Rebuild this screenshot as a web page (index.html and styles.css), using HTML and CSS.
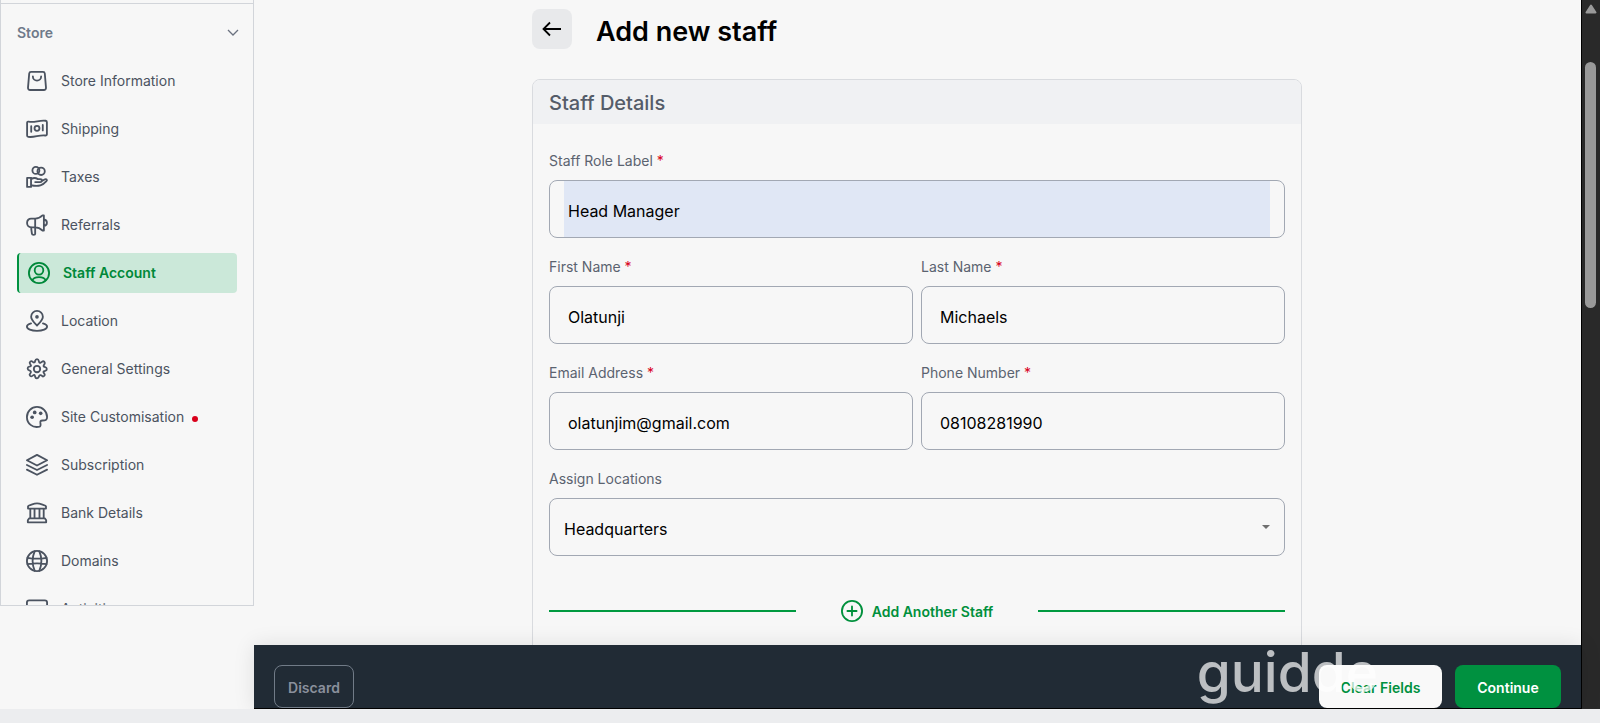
FILE: index.html
```html
<!DOCTYPE html>
<html lang="en">
<head>
<meta charset="utf-8">
<title>Add new staff</title>
<link rel="stylesheet" href="styles.css">
</head>
<body>
<div class="app">
  <div class="workspace">
    <nav class="sidebar" aria-label="Store">
      <button class="group" type="button">Store
        <svg class="chevron" viewBox="0 0 12 12"><path d="M1 3l5 5 5-5"/></svg>
      </button>
      <ul class="menu">
        <li><a class="item" href="#"><svg class="icon" viewBox="0 0 24 24"><path d="M5.500 2h13a2 2 0 0 1 2 1.800l1.300 15.400a2.300 2.300 0 0 1-2.300 2.600h-15a2.300 2.300 0 0 1-2.300-2.600L3.500 3.800a2 2 0 0 1 2-1.800zM7.500 7a4.500 4.500 0 0 0 9 0"/></svg>Store Information</a></li>
        <li><a class="item" href="#"><svg class="icon" viewBox="0 0 24 24"><path d="M1.200 5.300c0-1 .8-1.500 1.700-1.300 6.300 1.500 11.600-2 18.600-1 .8.100 1.300.7 1.300 1.500v13.200c0 1-.8 1.500-1.700 1.400-6.600-1-11.900 2.500-18.600 1.500-.8-.1-1.300-.7-1.300-1.500zM5.700 9v6M18.300 7.500v6"/><circle cx="12" cy="11.300" r="2.700"/></svg>Shipping</a></li>
        <li><a class="item" href="#"><svg class="icon" viewBox="0 0 24 24"><circle cx="10.800" cy="4.800" r="3.800"/><circle cx="16.500" cy="5.800" r="4"/><path d="M1.200 13h4.300v9.800H1.200zM5.500 14.300c3-1.800 5.500-1.300 7.500 0h2.500c2.500 0 2.500 3.200 0 3.200H10M17 16.500l3.800-2c1.500-.7 2.700.9 1.500 2-4 4.500-8 6.300-16.800 4.500"/></svg>Taxes</a></li>
        <li><a class="item" href="#"><svg class="icon" viewBox="0 0 24 24"><path d="M5.500 5H10v9.500H5.500a4.300 4.300 0 0 1-4.300-4.300v-.9A4.300 4.300 0 0 1 5.500 5zM10 5c3.500 0 6-1.500 8-3.500h1.500v16.500H18c-2-2-4.500-3.500-8-3.500M19.500 6c4.400.5 4.400 6.500 0 7M5.500 14.500l1 7.300c.2 1.300 3.500 1.300 3.500 0v-7.300"/></svg>Referrals</a></li>
        <li><a class="item active" href="#" aria-current="page"><svg class="icon" viewBox="0 0 24 24"><circle cx="12" cy="12" r="11"/><circle cx="12" cy="9" r="4.700"/><path d="M4.800 20c1.500-4.600 12.900-4.600 14.400 0"/></svg>Staff Account</a></li>
        <li><a class="item" href="#"><svg class="icon" viewBox="0 0 24 24"><path d="M12 17c-3.700-4-6.400-6.300-6.400-9.700a6.400 6.400 0 0 1 12.800 0c0 3.400-2.700 5.700-6.400 9.700z"/><circle class="dot" cx="12" cy="7.500" r="2"/><path d="M5.500 14.700c-2.900.8-4.500 1.800-4.500 3.300 0 2.800 4.800 4.700 11 4.700s11-1.900 11-4.700c0-1.500-1.600-2.500-4.500-3.300"/></svg>Location</a></li>
        <li><a class="item" href="#"><svg class="icon" viewBox="0 0 24 24"><circle cx="12" cy="12" r="3.500"/><path d="M10 3.500c.5-3 3.500-3 4 0s1.500 1.700 3.500.5 4 1 2.500 3-1 2.500 1 3 2.500 3.500 0 4-2.500 1-1 3-1 4-2.500 2.500-3-1-3.500 1-3.500 2.500-4 0-1-2.500-3-1-4-1-2.500-2.500 1-3-1-3.500-2.500-3.500 0-4 2.500-1 1-3 1-4 2.500-2.500 3 1 3-1z"/></svg>General Settings</a></li>
        <li><a class="item" href="#"><svg class="icon" viewBox="0 0 24 24"><path d="M15 22.500c-8 2-14-3.500-14-10.500a11 11 0 0 1 22 0c.2 3.500-2 3.800-5 3.800-2.200 0-2.500 1-2.300 2.700.3 1.500.5 3.500-.7 4z"/><circle class="dot" cx="6.700" cy="12.300" r="2"/><circle class="dot" cx="9.500" cy="7" r="2"/><circle class="dot" cx="16" cy="8" r="2"/></svg>Site Customisation<span class="notice"></span></a></li>
        <li><a class="item" href="#"><svg class="icon" viewBox="0 0 24 24"><path d="M12 1L23 6.800 12 12.500 1 6.800zM1 12l11 5.500L23 12M1 17l11 5.700L23 17"/></svg>Subscription</a></li>
        <li><a class="item" href="#"><svg class="icon" viewBox="0 0 24 24"><path d="M2.200 4.500C2.200 3.800 9 1.500 12 1.500s9.800 2.300 9.800 3v2.700H2.200zM4.700 7.200v10.300M9.300 7.200v10.300M14.700 7.200v10.300M19.300 7.200v10.300M3.500 17.800h17l1.500 2.200v2.200H2V20z"/></svg>Bank Details</a></li>
        <li><a class="item" href="#"><svg class="icon" viewBox="0 0 24 24"><circle cx="12" cy="12" r="11"/><path d="M9.500 1.300c-3 7-3 14.400 0 21.400M14.500 1.300c3 7 3 14.400 0 21.400M1.700 8.500c7 1.300 13.600 1.300 20.600 0M1.700 15.500c7-1.300 13.600-1.300 20.600 0"/></svg>Domains</a></li>
        <li><a class="item" href="#"><svg class="icon" viewBox="0 0 24 24"><rect x="1" y="2.500" width="22" height="19" rx="2.500"/></svg>Activities</a></li>
      </ul>
    </nav>

    <main class="main">
      <form class="page" id="staff">
        <header class="page-head">
          <button class="back" type="button" aria-label="Back"><svg viewBox="0 0 20 20"><path d="M19 10H1.500M8 3.500L1.500 10 8 16.500"/></svg></button>
          <h1>Add new staff</h1>
        </header>
        <section class="card">
          <h2>Staff Details</h2>
          <div class="fields">
            <div class="field wide">
              <label for="role">Staff Role Label <span class="req">*</span></label>
              <div class="box"><input class="autofilled" id="role" type="text" value="Head Manager"></div>
            </div>
            <div class="field">
              <label for="first">First Name <span class="req">*</span></label>
              <div class="box"><input id="first" type="text" value="Olatunji"></div>
            </div>
            <div class="field">
              <label for="last">Last Name <span class="req">*</span></label>
              <div class="box"><input id="last" type="text" value="Michaels"></div>
            </div>
            <div class="field">
              <label for="email">Email Address <span class="req">*</span></label>
              <div class="box"><input id="email" type="email" value="olatunjim@gmail.com"></div>
            </div>
            <div class="field">
              <label for="phone">Phone Number <span class="req">*</span></label>
              <div class="box"><input id="phone" type="tel" value="08108281990"></div>
            </div>
            <div class="field wide">
              <label for="location">Assign Locations</label>
              <div class="box"><select id="location"><option>Headquarters</option></select><svg class="caret" viewBox="0 0 8 4"><path d="M0 0h8L4 4z"/></svg></div>
            </div>
          </div>
          <div class="more">
            <button class="add" type="button"><svg class="icon" viewBox="0 0 24 24"><circle cx="12" cy="12" r="11"/><path d="M12 7v10M7 12h10"/></svg><span>Add Another Staff</span></button>
          </div>
        </section>
      </form>
    </main>

    <footer class="actions">
      <button class="btn discard" type="button">Discard</button>
      <div class="right">
        <button class="btn clear" type="reset" form="staff">Clear Fields</button>
        <button class="btn continue" type="submit" form="staff">Continue</button>
      </div>
      <span class="watermark">guidde</span>
    </footer>
  </div>
  <div class="scrollbar">
    <svg class="up" viewBox="0 0 12 10"><path d="M6 1.500L10.500 8.500h-9z"/></svg>
    <div class="thumb"></div>
  </div>
</div>
<div class="desk"></div>
</body>
</html>
```
FILE: styles.css
```css
* { box-sizing: border-box; }

body {
  margin: 0;
  height: 100vh;
  display: flex;
  flex-direction: column;
  overflow: hidden;
  background: #f7f7f7;
  color: #000;
  font: 14px/20px Inter, "Liberation Sans", sans-serif;
}

button, input, select { font: inherit; color: inherit; }
button { border: 0; padding: 0; cursor: pointer; }
h1, h2, ul { margin: 0; padding: 0; }

.app { flex: 1; min-height: 0; display: flex; overflow: hidden; }

.workspace {
  flex: 1;
  min-width: 0;
  display: grid;
  grid-template-columns: 254px 1fr;
  grid-template-rows: minmax(0, 1fr) auto;
}

/* Sidebar */
.sidebar {
  grid-row: 1;
  margin-bottom: 39px;
  padding: 0 16px;
  overflow: hidden;
  border: 1px solid #d2d5da;
  border-top: 0;
}
.group {
  width: calc(100% + 32px);
  margin: 3px -16px 0;
  padding: 19px 14px 18px 16px;
  display: flex;
  align-items: center;
  justify-content: space-between;
  background: none;
  border-top: 1px solid #d2d5da;
  color: #6f7a8a;
  font-weight: 600;
}
.chevron { width: 12px; height: 12px; fill: none; stroke: #6b7280; stroke-width: 1.3; }
.menu { list-style: none; display: flex; flex-direction: column; gap: 8px; }
.item {
  height: 40px;
  padding: 0 9px;
  display: flex;
  align-items: center;
  gap: 13px;
  border-radius: 4px;
  color: #4b5360;
  text-decoration: none;
}
.icon { width: 22px; height: 22px; flex: none; overflow: visible; fill: none; stroke: currentColor; stroke-width: 2; stroke-linejoin: round; stroke-linecap: round; }
.dot { fill: currentColor; stroke: none; }
.active { background: #cbe8d9; border-left: 2px solid #009140; color: #00883a; font-weight: 600; }
.notice { width: 6px; height: 6px; margin: 3px 0 0 -5px; border-radius: 50%; background: #d9001b; }

/* Page */
.main { overflow: hidden; padding: 9px 25px 0 24px; }
.page { width: 100%; max-width: 770px; margin: 0 auto; }
.page-head { display: flex; align-items: center; gap: 24px; height: 46px; }
.back { width: 40px; height: 40px; display: grid; place-items: center; border-radius: 8px; background: #e8e9eb; align-self: flex-start; }
.back svg { width: 20px; height: 20px; fill: none; stroke: #000; stroke-width: 1.8; }
h1 { font-size: 27px; line-height: 46px; font-weight: 600; }

.card { margin-top: 24px; height: 640px; border: 1px solid #d9dbdf; border-radius: 8px; overflow: hidden; }
h2 { padding: 2px 16px 0; background: #f0f1f3; color: #545c69; font-size: 20px; line-height: 42px; font-weight: 500; }
.fields { padding: 27px 16px 0; display: grid; grid-template-columns: 1fr 1fr; gap: 19px 8px; }
.wide { grid-column: 1 / -1; }
.field { display: flex; flex-direction: column; gap: 9px; color: #5b6370; }
.req { color: #d9001b; }
.box { height: 58px; padding: 0 14px; display: flex; align-items: center; border: 1px solid #a2a8b3; border-radius: 8px; color: #000; }
.box input, .box select { flex: 1; min-width: 0; height: 100%; padding: 3px 4px 0; border: 0; border-radius: 0; outline: 0; background: transparent; font-size: 16px; }
.box select { appearance: none; padding: 3px 0 0; }
.box .autofilled { background: #e0e7f5; }
.caret { width: 8px; height: 4px; fill: #6f6f6f; }
.more { margin: 44px 16px 0; display: flex; align-items: center; justify-content: space-between; }
.more::before, .more::after { content: ""; height: 2px; width: 247px; background: #009a40; }
.add { display: flex; align-items: center; gap: 9px; background: none; color: #00903c; font-weight: 600; }
.add span { padding-top: 2px; }

/* Action bar */
.actions {
  grid-column: 2;
  position: relative;
  padding: 20px 20px 0;
  display: flex;
  justify-content: space-between;
  background: #212b35;
  border-bottom: 1px solid #000;
  box-shadow: 0 0 20px rgba(0, 0, 0, .1);
}
.right { display: flex; gap: 13px; }
.btn { height: 43px; padding-top: 2px; border-radius: 8px; font-weight: 600; }
.discard { width: 80px; border: 1px solid #717b87; background: none; color: #8a909c; }
.clear { width: 123px; background: #f9f9f9; color: #009140; }
.continue { width: 106px; background: #009140; color: #fff; }
.watermark { position: absolute; right: 203px; top: -5px; color: rgba(255, 255, 255, .7); font-size: 55px; line-height: 64px; font-weight: 500; pointer-events: none; }

/* Window edge */
.scrollbar { width: 19px; padding: 4px 3px 0; background: #292929; border-left: 1px solid #000; }
.up { display: block; width: 12px; height: 10px; fill: #999; stroke: #999; stroke-width: 2; stroke-linejoin: round; }
.thumb { width: 11px; height: 246px; margin-top: 48px; border-radius: 6px; background: #999; }
.desk { height: 14px; background: #ecedef; }
```
